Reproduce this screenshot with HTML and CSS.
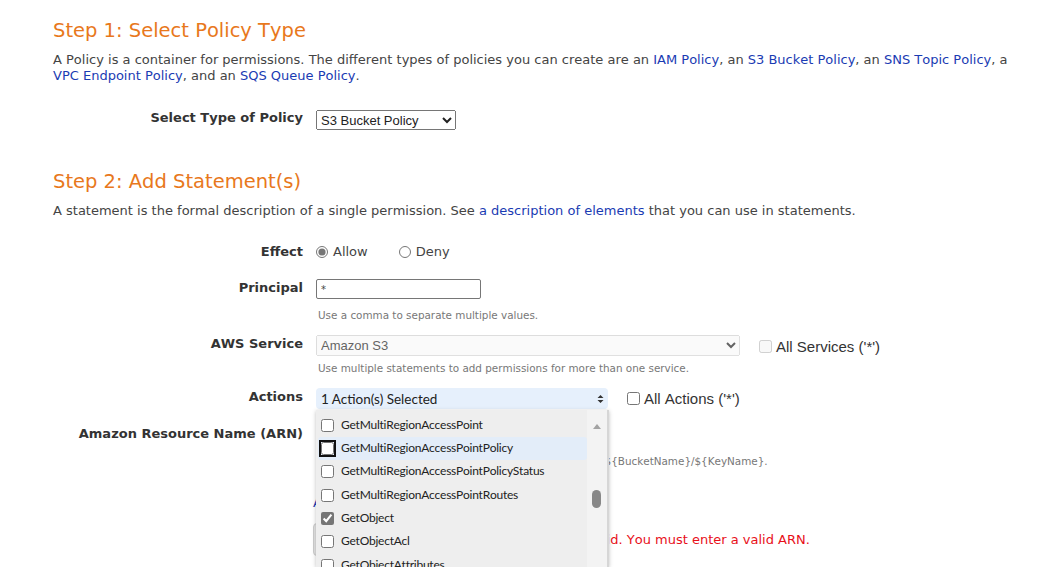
FILE: index.html
```html
<!DOCTYPE html>
<html>
<head>
<meta charset="utf-8">
<link rel="stylesheet" href="styles.css">
</head>
<body>
<div class="page">
  <h2 class="step">Step 1: Select Policy Type</h2>
  <p class="intro">A Policy is a container for permissions. The different types of policies you can create are an <a href="#">IAM Policy</a>, an <a href="#">S3 Bucket Policy</a>, an <a href="#">SNS Topic Policy</a>, a <a href="#">VPC Endpoint Policy</a>, and an <a href="#">SQS Queue Policy</a>.</p>
  <div class="row row-type">
    <label class="lbl">Select Type of Policy</label>
    <div class="ctl"><select class="sel sel-type"><option>S3 Bucket Policy</option></select></div>
  </div>

  <h2 class="step step2">Step 2: Add Statement(s)</h2>
  <p class="intro">A statement is the formal description of a single permission. See <a href="#">a description of elements</a> that you can use in statements.</p>

  <div class="row row-effect">
    <label class="lbl">Effect</label>
    <div class="ctl radios">
      <label class="opt"><input type="radio" name="eff" checked> Allow</label>
      <label class="opt opt-deny"><input type="radio" name="eff"> Deny</label>
    </div>
  </div>

  <div class="row row-principal">
    <label class="lbl">Principal</label>
    <div class="ctl"><input class="txt" type="text" value="*"></div>
  </div>
  <div class="row hint-row hint1">
    <span></span>
    <div class="hint">Use a comma to separate multiple values.</div>
  </div>

  <div class="row row-service">
    <label class="lbl">AWS Service</label>
    <div class="ctl inline">
      <select class="sel sel-service" disabled><option>Amazon S3</option></select>
      <label class="chk chk-disabled"><input type="checkbox" disabled> All Services ('*')</label>
    </div>
  </div>
  <div class="row hint-row hint2">
    <span></span>
    <div class="hint">Use multiple statements to add permissions for more than one service.</div>
  </div>

  <div class="row row-actions">
    <label class="lbl">Actions</label>
    <div class="ctl inline">
      <div class="ms">
        <button class="ms-btn" type="button"><span>1 Action(s) Selected</span>
          <svg width="7" height="10" viewBox="0 0 7 10"><path d="M3.5 1 L6.5 4 H0.5 Z M3.5 9 L6.5 6 H0.5 Z" fill="#333"/></svg>
        </button>
        <div class="ms-panel">
          <ul class="ms-list">
            <li><input type="checkbox"><span>GetMultiRegionAccessPoint</span></li>
            <li class="hover"><input type="checkbox" class="focus"><span>GetMultiRegionAccessPointPolicy</span></li>
            <li><input type="checkbox"><span>GetMultiRegionAccessPointPolicyStatus</span></li>
            <li><input type="checkbox"><span>GetMultiRegionAccessPointRoutes</span></li>
            <li><input type="checkbox" checked><span>GetObject</span></li>
            <li><input type="checkbox"><span>GetObjectAcl</span></li>
            <li><input type="checkbox"><span>GetObjectAttributes</span></li>
          </ul>
          <div class="ms-scroll">
            <span class="ms-up"></span>
            <span class="ms-thumb"></span>
          </div>
        </div>
      </div>
      <label class="chk chk-actions"><input type="checkbox"> All Actions ('*')</label>
    </div>
  </div>

  <div class="row row-arn">
    <label class="lbl">Amazon Resource Name (ARN)</label>
    <div class="ctl"><input class="txt txt-arn" type="text"></div>
  </div>
  <div class="row hint-row hint3">
    <span></span>
    <div class="hint">ARNs should follow the following format - arn:aws:s3:::${BucketName}/${KeyName}.</div>
  </div>

  <div class="row row-link">
    <span></span>
    <div class="ctl shift"><a href="#">Add Conditions (Optional)</a></div>
  </div>

  <div class="row row-submit">
    <span></span>
    <div class="ctl shift inline">
      <button class="btn" type="button">Add Statement</button>
      <span class="err">ARN field is invalid. You must enter a valid ARN.</span>
    </div>
  </div>
</div>
</body>
</html>
```

FILE: styles.css
```css
html {
  overflow: hidden;
}
html, body {
  margin: 0;
  padding: 0;
  background: #fff;
}
body {
  min-height: 567px;
  font-family: "DejaVu Sans", Verdana, sans-serif;
  font-size: 13px;
  color: #444;
  font-kerning: none;
}
a {
  color: #1a3bb3;
  text-decoration: none;
}
.page {
  margin-left: 53px;
  width: 972px;
  padding-top: 19px;
  padding-bottom: 10px;
}
.step {
  margin: 0;
  font-size: 19.5px;
  line-height: 24px;
  font-weight: normal;
  color: #e8781c;
}
.step2 {
  margin-top: 40px;
}
.intro {
  margin: 9px 0 0;
  line-height: 16px;
}
.row {
  display: grid;
  grid-template-columns: 250px 1fr;
  column-gap: 13px;
  align-items: start;
}
.lbl {
  text-align: right;
  font-weight: bold;
  color: #333;
  line-height: 16px;
  padding-top: 1px;
}
.ctl {
  min-width: 0;
}
.inline {
  display: flex;
  align-items: center;
}
.row-type { margin-top: 26px; }
.row-type .lbl { padding-top: 0; }
.sel {
  font-family: "Liberation Sans", Arial, sans-serif;
  font-size: 13px;
  margin: 0;
  color: #222;
}
.sel-type {
  width: 140px;
  height: 20px;
}
.row-effect { margin-top: 24px; }
.radios {
  display: flex;
  align-items: center;
  height: 17px;
}
.opt {
  display: inline-flex;
  align-items: center;
  gap: 5px;
  color: #444;
}
.opt input {
  margin: 0;
  width: 12px;
  height: 12px;
  accent-color: #767676;
}
.opt-deny { margin-left: 31px; }

.row-principal { margin-top: 19px; }
.txt {
  box-sizing: border-box;
  width: 165px;
  height: 20px;
  margin: 0;
  border: 1px solid #767676;
  border-radius: 2px;
  padding: 0 4px;
  font-family: "DejaVu Sans", sans-serif;
  font-size: 10px;
  color: #444;
}
.hint-row .hint {
  font-size: 10.4px;
  line-height: 13px;
  color: #777;
  padding-left: 2px;
  white-space: nowrap;
}
.hint1 { margin-top: 10px; }
.row-service { margin-top: 13px; }
.sel-service {
  width: 424px;
  height: 21px;
}
.chk {
  display: inline-flex;
  align-items: center;
  gap: 4px;
  font-family: "Liberation Sans", Arial, sans-serif;
  font-size: 15px;
  color: #333;
}
.chk input {
  margin: 0;
  width: 13px;
  height: 13px;
}
.chk-disabled { margin-left: 19px; position: relative; top: 1px; }
.hint2 { margin-top: 6px; }

.row-actions { margin-top: 13px; position: relative; z-index: 2; }
.ms {
  position: relative;
  width: 292px;
}
.ms-btn {
  box-sizing: border-box;
  width: 292px;
  height: 21px;
  display: flex;
  align-items: center;
  justify-content: space-between;
  padding: 0 4px 0 5px;
  border: none;
  border-radius: 4px;
  background: #e6f0fc;
  font-family: Lato, "Liberation Sans", sans-serif;
  font-size: 13.5px;
  color: #222;
}
.ms-panel {
  position: absolute;
  left: 0;
  top: 22px;
  width: 293px;
  height: 157px;
  box-sizing: border-box;
  display: flex;
  background: #eeeeee;
  border-right: 2px solid #d6d6d6;
  box-shadow: 0 1px 4px rgba(0, 0, 0, 0.25);
  overflow: hidden;
  padding-left: 2px;
}
.ms-list {
  list-style: none;
  margin: 0;
  padding: 3.5px 0 0;
  width: 269px;
}
.ms-list li {
  height: 23.33px;
  display: flex;
  align-items: center;
  gap: 7px;
  padding-left: 3px;
  border-radius: 3px;
  font-family: Lato, "Liberation Sans", sans-serif;
  font-size: 12px;
  letter-spacing: -0.25px;
  color: #222;
  white-space: nowrap;
}
.ms-list li span {
  position: relative;
  top: -1px;
}
.ms-list li.hover {
  background: #e3edf9;
}
.ms-list input {
  margin: 0;
  width: 13px;
  height: 13px;
  accent-color: #767676;
}
.ms-list input.focus {
  outline: 2px solid #111;
  outline-offset: 0;
  border-radius: 2px;
}
.ms-scroll {
  position: relative;
  width: 20px;
  background: #f3f3f3;
}
.ms-up {
  position: absolute;
  left: 6px;
  top: 14px;
  width: 0;
  height: 0;
  border-left: 4px solid transparent;
  border-right: 4px solid transparent;
  border-bottom: 5px solid #a3a3a3;
}
.ms-thumb {
  position: absolute;
  left: 5px;
  top: 80px;
  width: 9px;
  height: 18px;
  border-radius: 5px;
  background: #888;
}
.chk-actions { margin-left: 19px; }

.row-arn { margin-top: 16px; }
.txt-arn { width: 260px; }
.hint3 { margin-top: 10px; }
.hint3 .hint { padding-left: 3.5px; }
.row-link { margin-top: 27px; line-height: 16px; }
.shift { margin-left: -3px; }
.row-submit { margin-top: 12px; }
.btn {
  width: 170px;
  height: 33px;
  margin-right: 14px;
  border: 1px solid #ccc;
  border-radius: 4px;
  background: #e4e4e4;
  font-family: "DejaVu Sans", sans-serif;
  font-size: 13px;
  color: #333;
}
.err {
  color: #e8101a;
  white-space: nowrap;
}
```
